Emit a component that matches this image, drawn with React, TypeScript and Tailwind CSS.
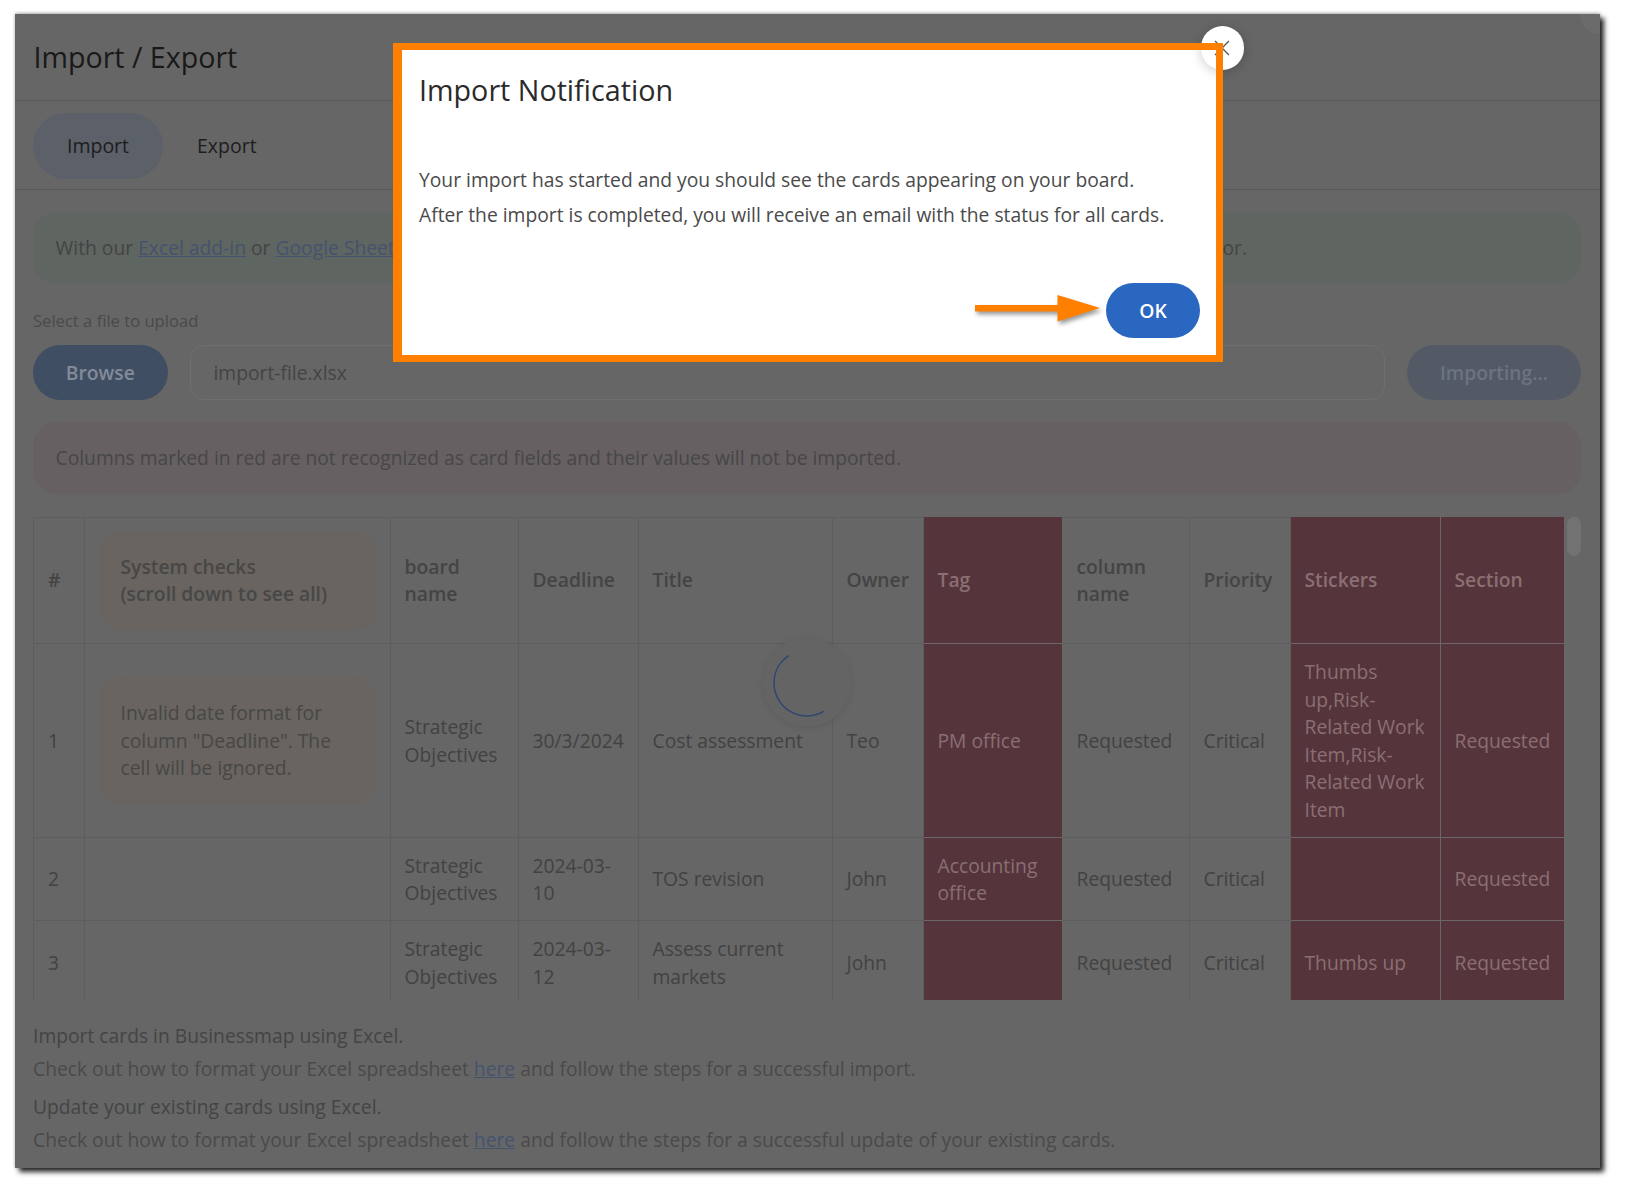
import React from "react";

const font = { fontFamily: '"Open Sans", "Noto Sans", sans-serif' };

type Cell = { t?: React.ReactNode; red?: boolean };

const cols = ["w-[50.5px]", "w-[306px]", "w-[128px]", "w-[120px]", "w-[194px]", "w-[91px]", "w-[139px]", "w-[127px]", "w-[101px]", "w-[150px]", "w-[124px]"];

function Pill({ children, className }: { children: React.ReactNode; className: string }) {
  return (
    <div className={`w-[276px] rounded-[22px] bg-[#69645f] pl-[21px] pr-[30px] flex flex-col justify-center ${className}`}>
      {children}
    </div>
  );
}

function Td({ c }: { c: Cell }) {
  return (
    <td
      className={`px-[14px] align-middle border-x border-b leading-[27.5px] ${
        c.red ? "bg-[#56343b] text-[#8a6f73] border-[#6b6668]" : "text-[#424242] border-[#5d5d5d]"
      }`}
    >
      {c.t}
    </td>
  );
}

function Th({ c }: { c: Cell }) {
  return (
    <th
      className={`px-[14px] pb-[2px] align-middle text-left font-semibold border-x border-y leading-[27px] ${
        c.red ? "bg-[#56343b] text-[#8a6f73] border-x-[#6b6668] border-b-[#6b6668] border-t-[#56343b]" : "text-[#444444] border-[#5d5d5d]"
      }`}
    >
      {c.t}
    </th>
  );
}

const rows: { h: string; cells: Cell[] }[] = [
  {
    h: "h-[194px]",
    cells: [
      { t: "Strategic Objectives" },
      { t: "30/3/2024" },
      { t: "Cost assessment" },
      { t: "Teo" },
      { t: "PM office", red: true },
      { t: "Requested" },
      { t: "Critical" },
      { t: "Thumbs up,Risk-Related Work Item,Risk-Related Work Item", red: true },
      { t: "Requested", red: true },
    ],
  },
  {
    h: "h-[83px]",
    cells: [
      { t: "Strategic Objectives" },
      { t: "2024-03-10" },
      { t: "TOS revision" },
      { t: "John" },
      { t: "Accounting office", red: true },
      { t: "Requested" },
      { t: "Critical" },
      { red: true },
      { t: "Requested", red: true },
    ],
  },
  {
    h: "h-[84px]",
    cells: [
      { t: "Strategic Objectives" },
      { t: "2024-03-12" },
      { t: "Assess current markets" },
      { t: "John" },
      { red: true },
      { t: "Requested" },
      { t: "Critical" },
      { t: "Thumbs up", red: true },
      { t: "Requested", red: true },
    ],
  },
];

const link = "underline text-[#45536f]";

export default function App() {
  return (
    <div style={font} className="relative w-[1626px] h-[1195px] bg-white overflow-hidden pt-[14px] pl-[14.5px] text-[19.28px]">
      <div className="relative w-[1585.5px] h-[1154px] bg-[#666666] overflow-hidden shadow-[4px_4px_5px_rgba(0,0,0,0.85),0_-1px_3px_rgba(0,0,0,0.3)] flex flex-col">
        <div className="absolute -right-[20px] -top-[20px] w-[40px] h-[40px] rounded-full bg-[#6b6b6b]" />

        <div className="h-[87px] shrink-0 border-b border-[#585858] pl-[19px] flex items-center">
          <h1 className="text-[28.6px] font-medium text-[#191919] leading-none">Import / Export</h1>
        </div>

        <div className="h-[89px] shrink-0 border-b border-[#585858] pl-[18.5px] flex items-center gap-[34px] pt-[1px]">
          <div className="w-[130px] h-[66px] rounded-[33px] bg-[#5b6069] flex items-center justify-center font-medium text-[19.5px] text-[#1d1d1d]">
            Import
          </div>
          <div className="font-medium text-[19.5px] text-[#1d1d1d]">Export</div>
        </div>

        <div className="flex-1 pl-[18.5px] pr-[19px] flex flex-col">
          <div className="mt-[22px] h-[72px] shrink-0 rounded-[24px] bg-[#5f6560] pl-[22.5px] flex items-center justify-between text-[#444444]">
            <span>
              With our <span className={link}>Excel add-in</span> or <span className={link}>Google Sheets</span>
            </span>
            <span className="pr-[334px]">or.</span>
          </div>

          <div className="mt-[19px] h-[36px] mb-[6px] shrink-0 flex items-center text-[16.6px] text-[#4a4a4a]">Select a file to upload</div>

          <div className="shrink-0 flex gap-[22px] h-[55px]">
            <div className="w-[134.5px] pt-[1px] rounded-[28px] bg-[#3f4e63] flex items-center justify-center font-semibold text-[#838b98]">Browse</div>
            <div className="flex-1 pt-[1px] rounded-[14px] border border-[#6f6f6f] pl-[23px] flex items-center text-[#444444]">import-file.xlsx</div>
            <div className="w-[174px] pt-[1px] rounded-[28px] bg-[#535a66] flex items-center justify-center font-semibold text-[#6d7480]">Importing...</div>
          </div>

          <div className="mt-[22px] h-[72px] shrink-0 rounded-[24px] bg-[#666062] pl-[22.5px] flex items-center text-[#474747]">
            Columns marked in red are not recognized as card fields and their values will not be imported.
          </div>

          <div className="relative mt-[23px] shrink-0 h-[483px] overflow-hidden">
            <table className="table-fixed border-collapse w-[1530.5px]">
              <colgroup>
                {cols.map((c, i) => (
                  <col key={i} className={c} />
                ))}
              </colgroup>
              <thead>
                <tr className="h-[126px]">
                  <Th c={{ t: "#" }} />
                  <th className="border border-[#5d5d5d] px-[15px] align-middle text-left font-semibold leading-[27px] text-[#474747]">
                    <Pill className="h-[98px] pb-[2px]">
                      <div className="whitespace-nowrap">System checks</div>
                      <div className="whitespace-nowrap">(scroll down to see all)</div>
                    </Pill>
                  </th>
                  <Th c={{ t: "board name" }} />
                  <Th c={{ t: "Deadline" }} />
                  <Th c={{ t: "Title" }} />
                  <Th c={{ t: "Owner" }} />
                  <Th c={{ t: "Tag", red: true }} />
                  <Th c={{ t: "column name" }} />
                  <Th c={{ t: "Priority" }} />
                  <Th c={{ t: "Stickers", red: true }} />
                  <Th c={{ t: "Section", red: true }} />
                </tr>
              </thead>
              <tbody>
                {rows.map((r, i) => (
                  <tr key={i} className={r.h}>
                    <Td c={{ t: String(i + 1) }} />
                    <td className="border-x border-b border-[#5d5d5d] px-[15px] align-middle leading-[27.5px] text-[#474747]">
                      {i === 0 && (
                        <Pill className="h-[127px]">
                          <div>Invalid date format for column "Deadline". The cell will be ignored.</div>
                        </Pill>
                      )}
                    </td>
                    {r.cells.map((c, j) => (
                      <Td key={j} c={c} />
                    ))}
                  </tr>
                ))}
              </tbody>
            </table>
            <div className="absolute right-0 top-0 w-[14px] h-[39px] rounded-[7px] bg-[#727272]" />
            <div className="absolute left-[729.5px] top-[121px] w-[88px] h-[89px] rounded-full bg-[#646464] shadow-[0_1px_6px_rgba(0,0,0,0.1)] flex items-center justify-center">
              <svg width="88" height="88" viewBox="0 0 88 88" fill="none">
                <path d="M25.4 16.8 A33 33 0 0 0 11 44 A33 33 0 0 0 60.7 72.4" stroke="#2b4770" strokeWidth="1.4" strokeLinecap="round" />
              </svg>
            </div>
          </div>

          <div className="mt-[19px] leading-[33px] text-[#444444]">
            <div className="h-[33px]">Import cards in Businessmap using Excel.</div>
            <div className="h-[33px] text-[#4a4a4a]">
              Check out how to format your Excel spreadsheet <span className={link}>here</span> and follow the steps for a successful import.
            </div>
            <div className="h-[33px] mt-[5px]">Update your existing cards using Excel.</div>
            <div className="h-[33px] text-[#4a4a4a]">
              Check out how to format your Excel spreadsheet <span className={link}>here</span> and follow the steps for a successful update of your existing cards.
            </div>
          </div>
        </div>
      </div>

      {/* Modal over the dimmed page */}
      <div className="absolute left-[393px] top-[43px] w-[830px] h-[319px] bg-white flex flex-col pl-[26px] pr-[23px] pb-[24px] text-[#4a4a4a]">
        <h2 className="mt-[29px] text-[28.7px] leading-[36px] font-medium text-[#2a2a2a]">Import Notification</h2>
        <div className="mt-[54px] leading-[35px]">
          <p>Your import has started and you should see the cards appearing on your board.</p>
          <p>After the import is completed, you will receive an email with the status for all cards.</p>
        </div>
        <div className="mt-auto flex justify-end">
          <button className="w-[94px] h-[55px] pt-[1px] rounded-[28px] bg-[#2967c0] text-white font-semibold text-[19.28px]">OK</button>
        </div>
      </div>

      {/* Close button peeking from the modal corner */}
      <div className="absolute left-[1201px] top-[26px] w-[43px] h-[44px] rounded-full bg-white shadow-[0_2px_12px_rgba(0,0,0,0.2)] flex items-center justify-center">
        <svg className="-ml-[2px]" width="16" height="16" viewBox="0 0 16 16" fill="none">
          <path d="M1 1 L15 15 M15 1 L1 15" stroke="#555555" strokeWidth="1.3" />
        </svg>
      </div>

      {/* Annotation frame and arrow */}
      <div className="absolute left-[393px] top-[43px] w-[830px] h-[319px] border-[7px] border-l-[9px] border-[#ff8000]" />
      <svg className="absolute left-[970px] top-[290px] drop-shadow-[2px_3px_2px_rgba(0,0,0,0.4)]" width="136" height="40" viewBox="0 0 136 40" fill="none">
        <path d="M5 15 H87.5 V5 L130 18 L87.5 31.5 V21.5 H5 Z" fill="#ff8000" />
      </svg>
    </div>
  );
}
